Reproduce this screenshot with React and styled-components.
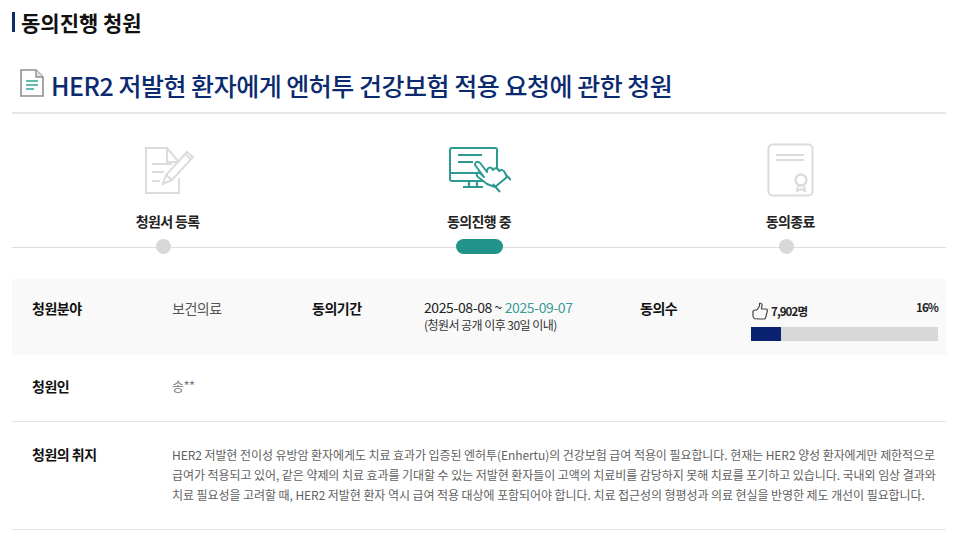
import React from 'react'
import styled, { createGlobalStyle } from 'styled-components'

const Global = createGlobalStyle`
html, body { margin: 0; padding: 0; background: #fff; }
body { font-family: "Noto Sans CJK KR", "Noto Sans", sans-serif; color: #111; overflow: hidden; }
* { box-sizing: border-box; }
`

const Page = styled.div`
  width: 960px;
  height: 541px;
  padding: 0 14px 0 12px;
  overflow: hidden;
`

const PageTitle = styled.h1`
  margin: 12px 0 0;
  height: 20px;
  display: flex;
  align-items: center;
  border-left: 3px solid #0b2a6f;
  padding-left: 6px;
  font-size: 21px;
  font-weight: 700;
  color: #111;
`

const TitleRow = styled.div`
  height: 82px;
  padding: 37px 0 0 8px;
  border-bottom: 2px solid #e6e6e6;
  display: flex;
  align-items: flex-start;
  gap: 7px;
`

const TitleText = styled.h2`
  margin: 0;
  font-size: 25px;
  line-height: 32px;
  font-weight: 500;
  letter-spacing: -0.48px;
  color: #0b2a6f;
  white-space: nowrap;
`

const Steps = styled.div`
  position: relative;
  display: grid;
  grid-template-columns: repeat(3, 1fr);
  height: 144px;
  margin-bottom: 21px;
  &::after {
    content: '';
    position: absolute;
    left: 0;
    right: 0;
    top: 133px;
    height: 1px;
    background: #dedede;
  }
`

const Step = styled.div`
  display: flex;
  flex-direction: column;
  align-items: center;
`

const StepIcon = styled.div`
  height: 64px;
  margin-top: 24px;
  margin-left: ${p => p.$shift || 0}px;
  display: flex;
  align-items: center;
  justify-content: center;
`

const StepLabel = styled.div`
  margin-top: 7px;
  height: 24px;
  line-height: 24px;
  font-size: 14px;
  font-weight: 700;
  letter-spacing: -0.6px;
  color: #222;
`

const Dot = styled.span`
  position: relative;
  z-index: 1;
  margin-top: 6px;
  margin-right: ${p => (p.$active ? '0' : '8px')};
  margin-left: ${p => (p.$active ? '2px' : '0')};
  width: ${p => (p.$active ? '47px' : '15px')};
  height: 15px;
  border-radius: 8px;
  background: ${p => (p.$active ? '#21938a' : '#d8d8d8')};
`

const InfoRow = styled.div`
  display: grid;
  grid-template-columns: 140px 140px 112px 216px 111px 187px;
  padding-left: 20px;
  background: ${p => (p.$shade ? '#f9f9f9' : '#fff')};
  height: ${p => p.$h}px;
  padding-top: ${p => p.$top}px;
  border-bottom: ${p => (p.$line ? '1px solid #e3e3e3' : 'none')};
`

const Label = styled.div`
  font-size: 14px;
  line-height: 20px;
  font-weight: 700;
  letter-spacing: -0.5px;
  color: #111;
`

const Value = styled.div`
  font-size: ${p => p.$size || 14}px;
  line-height: 20px;
  letter-spacing: -0.5px;
  color: ${p => p.$color || '#555'};
`

const Dates = styled.div`
  font-size: 14px;
  line-height: 19px;
  letter-spacing: -0.4px;
  color: #222;
`

const EndDate = styled.span`
  color: #3d9c98;
`

const Note = styled.div`
  font-size: 12px;
  line-height: 16px;
  letter-spacing: -0.55px;
  color: #333;
`

const Count = styled.div`
  display: flex;
  flex-direction: column;
`

const CountHead = styled.div`
  display: flex;
  justify-content: space-between;
  height: 29px;
  font-size: 11.5px;
  line-height: 18px;
  font-weight: 700;
  letter-spacing: -0.9px;
  color: #222;
`

const People = styled.span`
  display: flex;
  align-items: center;
  gap: 3px;
  height: 18px;
  margin-top: 4px;
  padding-left: 1px;
`

const Track = styled.div`
  height: 14px;
  background: #d8d8d8;
`

const Fill = styled.div`
  height: 100%;
  background: #0b2270;
`

const Purpose = styled.div`
  grid-column: 2 / -1;
  margin-top: 1px;
  font-size: 12px;
  line-height: 20px;
  color: #5f5f5f;
  width: 770px;
  letter-spacing: -0.07px;
`

const DocIcon = () => (
  <svg width="24" height="28" viewBox="0 0 24 28" fill="none">
    <path d="M1 1h15l7 7v19H1z" fill="#fff" stroke="#8f8f8f" strokeWidth="1.6" />
    <path d="M16 1v7h7" fill="#e4e4e4" stroke="#8f8f8f" strokeWidth="1.4" />
    <path d="M6 12h12M6 16h12M6 20h8" stroke="#31a59b" strokeWidth="1.5" />
  </svg>
)

const WriteIcon = () => (
  <svg width="50" height="47" viewBox="0 0 50 47" fill="none" stroke="#dcdcdc" strokeWidth="2">
    <path d="M34 31v15H1V1h21l12 14v4" />
    <path d="M22 1v14h12" />
    <path d="M7 17h20M7 25h12M7 34h8" />
    <path d="M18 37l3-9 21-23 6 5-21 23z" fill="#fff" />
    <path d="M40 7l6 5M21 28l6 5" />
  </svg>
)

const MonitorIcon = () => (
  <svg width="62" height="46" viewBox="0 0 62 46" fill="none" stroke="#2c9a91" strokeWidth="2" strokeLinejoin="round">
    <rect x="1" y="1" width="47" height="33" rx="2" />
    <path d="M1 26h47" />
    <path d="M9 8h24M9 15h15" />
    <path d="M20 34v6M28 34v6M14 40h20" strokeWidth="2.2" />
    <path d="M26 18c0-4 4-4 6-1l6 8c0-5 4-6 6-2 2-3 5-2 6 1 2-2 5-1 6 2l2 4-12 10-8-3-9-7c-3-3 0-6 3-3l3 3z" fill="#fff" />
    <path d="M44 37l7 8M57 28l5 5" />
  </svg>
)

const CertIcon = () => (
  <svg width="47" height="54" viewBox="0 0 47 54" fill="none" stroke="#dcdcdc" strokeWidth="2">
    <rect x="1.5" y="1.5" width="44" height="51" rx="4" />
    <path d="M9 12h28M9 17h28" />
    <circle cx="34" cy="37" r="5.5" strokeWidth="2.4" />
    <path d="M31 43l-1 5 4-2 4 2-1-5" />
  </svg>
)

const ThumbIcon = () => (
  <svg width="16" height="18" viewBox="0 0 16 18" fill="none" stroke="#444" strokeWidth="1.2" strokeLinejoin="round">
    <path d="M5 8l2.5-4V1.4c1.6-.6 2.8.6 2.5 2.2L9.4 7h4.4c1.2 0 1.8 1 1.5 2.2l-1.7 6.4c-.2.9-.9 1.4-1.7 1.4H6c-.6 0-1-.3-1.4-.9" />
    <path d="M5 8H3.2C2 8 1 8.8 1 10v3.6C1 15.4 2.4 17 4 17" />
  </svg>
)

const App = () => (
  <Page>
    <Global />
    <PageTitle>동의진행 청원</PageTitle>
    <TitleRow>
      <DocIcon />
      <TitleText>HER2 저발현 환자에게 엔허투 건강보험 적용 요청에 관한 청원</TitleText>
    </TitleRow>
    <Steps>
      <Step>
        <StepIcon $shift={4}><WriteIcon /></StepIcon>
        <StepLabel>청원서 등록</StepLabel>
        <Dot />
      </Step>
      <Step>
        <StepIcon $shift={2}><MonitorIcon /></StepIcon>
        <StepLabel>동의진행 중</StepLabel>
        <Dot $active />
      </Step>
      <Step>
        <StepIcon><CertIcon /></StepIcon>
        <StepLabel>동의종료</StepLabel>
        <Dot />
      </Step>
    </Steps>
    <InfoRow $shade $h={76} $top={19}>
      <Label>청원분야</Label>
      <Value>보건의료</Value>
      <Label>동의기간</Label>
      <div>
        <Dates>2025-08-08 ~ <EndDate>2025-09-07</EndDate></Dates>
        <Note>(청원서 공개 이후 30일 이내)</Note>
      </div>
      <Label>동의수</Label>
      <Count>
        <CountHead>
          <People><ThumbIcon />7,902명</People>
          <span>16%</span>
        </CountHead>
        <Track><Fill style={{ width: '16%' }} /></Track>
      </Count>
    </InfoRow>
    <InfoRow $h={67} $top={21} $line>
      <Label>청원인</Label>
      <Value $color="#777" $size={13}>송**</Value>
    </InfoRow>
    <InfoRow $h={108} $top={22} $line>
      <Label>청원의 취지</Label>
      <Purpose>
        HER2 저발현 전이성 유방암 환자에게도 치료 효과가 입증된 엔허투(Enhertu)의 건강보험 급여 적용이 필요합니다. 현재는 HER2 양성 환자에게만 제한적으로 급여가 적용되고 있어, 같은 약제의 치료 효과를 기대할 수 있는 저발현 환자들이 고액의 치료비를 감당하지 못해 치료를 포기하고 있습니다. 국내외 임상 결과와 치료 필요성을 고려할 때, HER2 저발현 환자 역시 급여 적용 대상에 포함되어야 합니다. 치료 접근성의 형평성과 의료 현실을 반영한 제도 개선이 필요합니다.
      </Purpose>
    </InfoRow>
  </Page>
)

export default App
